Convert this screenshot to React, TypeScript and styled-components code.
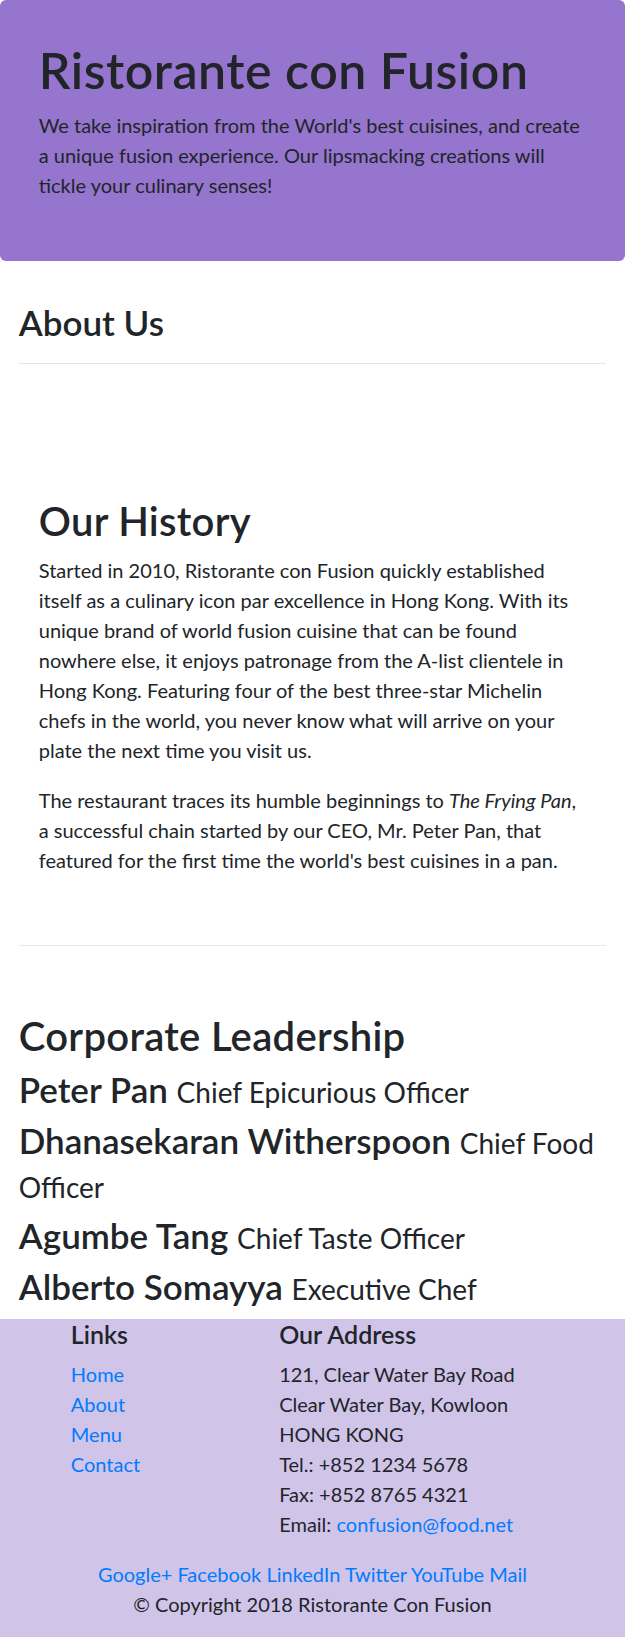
import React from "react";
import styled, { createGlobalStyle } from "styled-components";

const GlobalStyle = createGlobalStyle`
  *, *::before, *::after { box-sizing: border-box; }
  body {
    margin: 0;
    font-family: Lato, "Liberation Sans", sans-serif;
    font-size: 20px;
    line-height: 1.5;
    color: #212529;
    background: #ffffff;
  }
  h1, h2, h3, h5, p, ul, address { margin: 0; }
`;

const Jumbotron = styled.header`
  background: #9575cd;
  border-radius: 6px;
  padding: 40px 20px 41px;
  margin-bottom: 40px;
`;

const Container = styled.div`
  padding: 0 18.75px;
`;

const Title = styled.h1`
  font-size: 50px;
  line-height: 60px;
  font-weight: 600;
  letter-spacing: 0.55px;
  margin-bottom: 10px;
`;

const Lead = styled.p`
  margin-bottom: 20px;
`;

const PageHeading = styled.h3`
  font-size: 35px;
  line-height: 42px;
  font-weight: 600;
  margin-bottom: 10px;
`;

const Divider = styled.hr`
  margin: 20px 0;
  border: 0;
  border-top: 1px solid rgba(0, 0, 0, 0.1);
`;

const HistorySection = styled.section`
  padding: 62.5px 0;
  border-bottom: 1px solid #e8e8e8;
`;

const HistoryCard = styled.article`
  padding: 50px 20px 8px;
`;

const SectionTitle = styled.h2<{ $tight?: boolean }>`
  font-size: 40px;
  line-height: 48px;
  font-weight: 600;
  letter-spacing: 0.3px;
  margin-bottom: ${(p) => (p.$tight ? 7 : 10)}px;
`;

const Paragraph = styled.p`
  margin-bottom: 20px;
  &:last-child { margin-bottom: 0; }
`;

const LeadershipSection = styled.section`
  padding: 65.5px 0 4px;
`;

const LeaderName = styled.h3`
  font-size: 35px;
  line-height: 44px;
  font-weight: 600;
  margin-bottom: 7px;
`;

const LeaderRole = styled.small`
  font-size: 28px;
  line-height: 1;
  font-weight: 400;
`;

const Footer = styled.footer`
  background: #d1c4e9;
  padding-bottom: 25px;
`;

const FooterRow = styled.div`
  display: flex;
  flex-wrap: wrap;
  margin: 0 -18.75px;
`;

const FooterCol = styled.div<{ $span: number; $offset?: number; $center?: boolean }>`
  flex: 0 0 ${(p) => (p.$span / 12) * 100}%;
  max-width: ${(p) => (p.$span / 12) * 100}%;
  margin-left: ${(p) => ((p.$offset ?? 0) / 12) * 100}%;
  padding: 0 18.75px;
  text-align: ${(p) => (p.$center ? "center" : "left")};
`;

const FooterHeading = styled.h5`
  font-size: 25px;
  line-height: 30px;
  font-weight: 600;
  margin-bottom: 10px;
`;

const LinkList = styled.ul`
  list-style: none;
  padding: 0;
`;

const Link = styled.a`
  color: #007bff;
  text-decoration: none;
`;

const Address = styled.address`
  font-style: normal;
  margin-bottom: 20px;
`;

const Copyright = styled.p`
  text-align: center;
  margin-bottom: 20px;
`;

const leaders = [
  { name: "Peter Pan", role: "Chief Epicurious Officer" },
  { name: "Dhanasekaran Witherspoon", role: "Chief Food Officer" },
  { name: "Agumbe Tang", role: "Chief Taste Officer" },
  { name: "Alberto Somayya", role: "Executive Chef" },
];

const links = ["Home", "About", "Menu", "Contact"];
const socials = ["Google+", "Facebook", "LinkedIn", "Twitter", "YouTube", "Mail"];

export default function App() {
  return (
    <>
      <GlobalStyle />
      <Jumbotron>
        <Container>
          <Title>Ristorante con Fusion</Title>
          <Lead>
            We take inspiration from the World's best cuisines, and create a unique fusion experience. Our
            lipsmacking creations will tickle your culinary senses!
          </Lead>
        </Container>
      </Jumbotron>
      <Container>
        <PageHeading>About Us</PageHeading>
        <Divider />
        <HistorySection>
          <HistoryCard>
            <SectionTitle>Our History</SectionTitle>
            <Paragraph>
              Started in 2010, Ristorante con Fusion quickly established itself as a culinary icon par excellence in
              Hong Kong. With its unique brand of world fusion cuisine that can be found nowhere else, it enjoys
              patronage from the A-list clientele in Hong Kong. Featuring four of the best three-star Michelin chefs
              in the world, you never know what will arrive on your plate the next time you visit us.
            </Paragraph>
            <Paragraph>
              The restaurant traces its humble beginnings to <em>The Frying Pan</em>, a successful chain started by
              our CEO, Mr. Peter Pan, that featured for the first time the world's best cuisines in a pan.
            </Paragraph>
          </HistoryCard>
        </HistorySection>
        <LeadershipSection>
          <SectionTitle $tight>Corporate Leadership</SectionTitle>
          {leaders.map((l) => (
            <LeaderName key={l.name}>
              {l.name} <LeaderRole>{l.role}</LeaderRole>
            </LeaderName>
          ))}
        </LeadershipSection>
      </Container>
      <Footer>
        <Container>
          <FooterRow>
            <FooterCol $span={4} $offset={1}>
              <FooterHeading>Links</FooterHeading>
              <LinkList>
                {links.map((l) => (
                  <li key={l}>
                    <Link href="#">{l}</Link>
                  </li>
                ))}
              </LinkList>
            </FooterCol>
            <FooterCol $span={7}>
              <FooterHeading>Our Address</FooterHeading>
              <Address>
                121, Clear Water Bay Road
                <br />
                Clear Water Bay, Kowloon
                <br />
                HONG KONG
                <br />
                Tel.: +852 1234 5678
                <br />
                Fax: +852 8765 4321
                <br />
                Email: <Link href="mailto:confusion@food.net">confusion@food.net</Link>
              </Address>
            </FooterCol>
            <FooterCol $span={12} $center>
              {socials.map((s, i) => (
                <React.Fragment key={s}>
                  {i > 0 && " "}
                  <Link href="#">{s}</Link>
                </React.Fragment>
              ))}
            </FooterCol>
          </FooterRow>
          <Copyright>© Copyright 2018 Ristorante Con Fusion</Copyright>
        </Container>
      </Footer>
    </>
  );
}
